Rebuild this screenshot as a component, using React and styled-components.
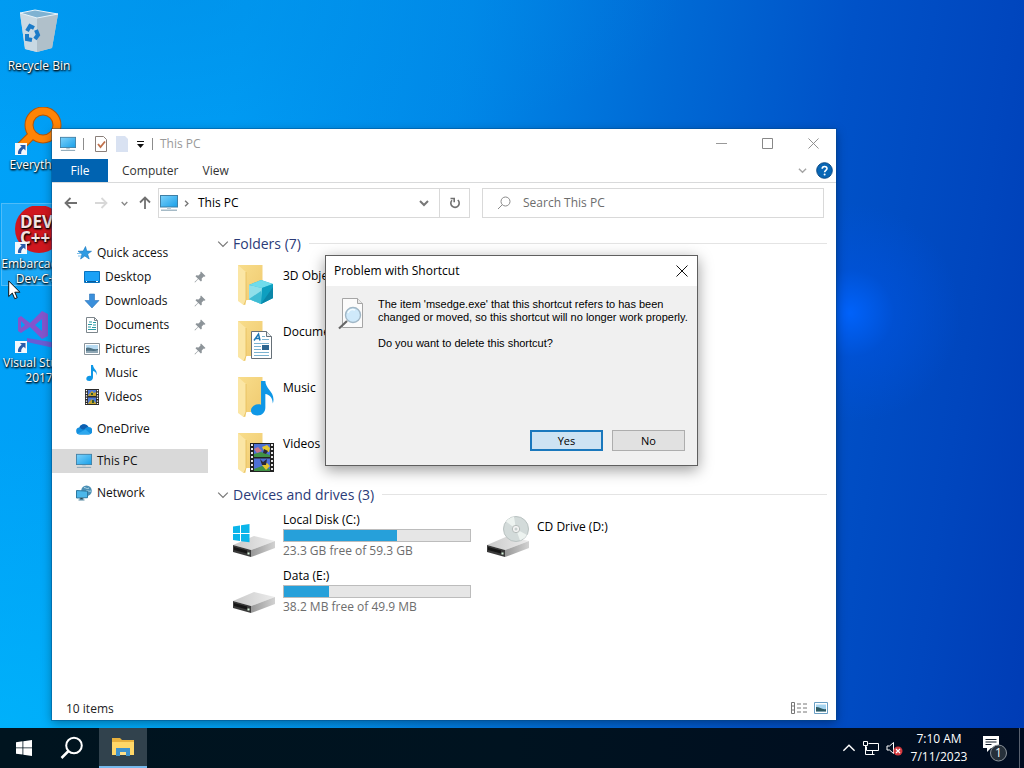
import React from 'react'
import styled, { createGlobalStyle, css } from 'styled-components'

const GlobalStyle = createGlobalStyle`
  * {
    box-sizing: border-box;
  }

  body {
    margin: 0;
    overflow: hidden;
    font-family: 'Open Sans', 'Noto Sans', sans-serif;
    font-size: 12px;
    line-height: 16px;
    color: #000;
  }

  button,
  input {
    font: inherit;
    color: inherit;
    margin: 0;
    padding: 0;
    border: 0;
    background: none;
  }

  svg {
    display: block;
    flex: none;
  }
`

const Screen = styled.div`
  display: flex;
  flex-direction: column;
  height: 100vh;
`

const Desktop = styled.main`
  position: relative;
  flex: 1;
  min-height: 0;
  overflow: hidden;
  background:
    radial-gradient(ellipse 110px 110px at 83% 43%, #0062fa 0%, rgba(0, 84, 225, 0.5) 40%, rgba(0, 76, 205, 0) 100%),
    radial-gradient(ellipse 420px 300px at 0% 100%, rgba(0, 184, 252, 0.7) 0%, rgba(0, 180, 250, 0) 100%),
    radial-gradient(ellipse 500px 160px at 18% 0%, rgba(0, 140, 228, 0.5) 0%, rgba(0, 140, 228, 0) 100%),
    linear-gradient(98deg, #00a2f8 0%, #009cf4 22%, #0088e8 42%, #006ad5 60%, #0052c8 76%, #0046be 90%, #003cb5 100%);
`

const ShortcutList = styled.div`
  display: flex;
  flex-direction: column;
  gap: 16px;
  width: 77px;
  padding: 5px 0 0 1px;
`

const Shortcut = styled.a`
  display: flex;
  flex-direction: column;
  align-items: center;
  gap: 2px;
  height: 83px;
  padding-top: 2px;
  border: 1px solid ${(props) => (props.$selected ? '#4fbcf8' : 'transparent')};
  background: ${(props) => (props.$selected ? 'rgba(110, 195, 250, 0.25)' : 'none')};
  color: #fff;
  line-height: 15px;
  text-align: center;
  text-decoration: none;
  text-shadow: 0 1px 2px #000, 1px 1px 2px #000;
`

const Cursor = styled.svg`
  position: absolute;
  left: 8px;
  top: 280px;
`

const Window = styled.section`
  position: absolute;
  left: 52px;
  top: 129px;
  width: 784px;
  height: 591px;
  display: flex;
  flex-direction: column;
  background: #fff;
  box-shadow: 0 0 0 1px rgba(0, 70, 130, 0.4), 0 3px 10px rgba(0, 0, 0, 0.35);
`

const TitleBar = styled.header`
  display: flex;
  height: 30px;
  padding-left: 8px;
  color: #999;
`

const QuickTools = styled.div`
  display: flex;
  align-items: center;
  flex: 1;
  gap: 7px;
`

const Divider = styled.span`
  width: 1px;
  height: 12px;
  margin-right: ${(props) => (props.$wide ? '3px' : '0')};
  background: #8c8c8c;
`

const CaptionButton = styled.button`
  display: flex;
  align-items: center;
  justify-content: center;
  width: 46px;
  height: 28px;
  color: #999;
`

const Ribbon = styled.div`
  display: flex;
  align-items: center;
  height: 24px;
  padding-right: 3px;
  border-bottom: 1px solid #d9dadb;
  color: #333;
`

const RibbonTab = styled.button`
  height: 23px;
  padding: 0 10px 0 14px;

  ${(props) =>
    props.$active &&
    css`
      width: 56px;
      padding: 0;
      background: #0063b1;
      color: #fff;
    `}
`

const RibbonEnd = styled.div`
  display: flex;
  align-items: center;
  gap: 9px;
  margin-left: auto;
`

const NavRow = styled.div`
  display: grid;
  grid-template-columns: 30px 30px 16px 26px minmax(0, 1fr) 342px;
  align-items: center;
  height: 40px;
  padding: 0 12px 0 4px;
`

const NavButton = styled.button`
  display: flex;
  align-items: center;
  justify-content: center;
  height: 30px;
`

const AddressBar = styled.div`
  display: flex;
  align-items: center;
  height: 30px;
  margin-right: 12px;
  border: 1px solid #d9d9d9;
`

const Crumbs = styled.div`
  display: flex;
  align-items: center;
  flex: 1;
  gap: 5px;
  padding-left: 1px;

  button {
    padding-left: 3px;
  }
`

const AddressButton = styled(NavButton)`
  width: 30px;
  height: 28px;
  border-left: ${(props) => (props.$divided ? '1px solid #d9d9d9' : '0')};
`

const SearchBox = styled.label`
  display: flex;
  align-items: center;
  gap: 12px;
  height: 30px;
  padding: 0 14px;
  border: 1px solid #d9d9d9;

  input {
    flex: 1;
    min-width: 0;
    outline: none;
  }

  input::placeholder {
    color: #6d6d6d;
    opacity: 1;
  }
`

const WindowBody = styled.div`
  display: flex;
  flex: 1;
  min-height: 0;
`

const Sidebar = styled.nav`
  width: 156px;
  padding-top: 18px;
`

const SideLink = styled.a`
  display: flex;
  align-items: center;
  gap: 5px;
  height: 24px;
  margin-top: ${(props) => (props.$spaced ? '8px' : '0')};
  padding: 0 2px 0 ${(props) => (props.$nested ? '32px' : '24px')};
  background: ${(props) => (props.$active ? '#d9d9d9' : 'none')};
  color: #111;
  text-decoration: none;

  svg:last-child:not(:first-child) {
    margin-left: auto;
  }
`

const Content = styled.div`
  flex: 1;
  padding: 8px 9px 0;
`

const GroupTitle = styled.h2`
  display: flex;
  align-items: center;
  gap: 4px;
  height: 25px;
  margin: 0;
  font-size: 14px;
  font-weight: 400;
  color: #2b3b78;

  &::after {
    content: '';
    flex: 1;
    height: 1px;
    margin-left: 4px;
    background: #e4e4e4;
  }
`

const TileGrid = styled.div`
  display: grid;
  grid-template-columns: repeat(auto-fill, 254px);
  grid-auto-rows: 56px;
  padding: 2px 0 0 12px;
`

const Tile = styled.div`
  display: flex;
  gap: 6px;
  padding-top: 3px;
`

const TileText = styled.div`
  width: 188px;
  padding-top: ${(props) => (props.$drive ? '0' : '7px')};
`

const Meter = styled.div`
  height: 13px;
  margin: 1px 0;
  border: 1px solid #bcbcbc;
  background: #e6e6e6;
`

const MeterFill = styled.div`
  height: 100%;
  background: #26a0da;
`

const FreeSpace = styled.div`
  color: #6d6d6d;
`

const StatusBar = styled.footer`
  display: flex;
  align-items: center;
  justify-content: space-between;
  height: 22px;
  padding: 0 8px 0 14px;
  color: #222;
`

const ViewButtons = styled.div`
  display: flex;
  gap: 7px;
  padding-bottom: 2px;
`

const Dialog = styled.section`
  position: absolute;
  left: 325px;
  top: 255px;
  width: 373px;
  height: 211px;
  display: flex;
  flex-direction: column;
  border: 1px solid #5f5f5f;
  background: #f0f0f0;
  box-shadow: 0 4px 14px rgba(0, 0, 0, 0.4);
`

const DialogTitle = styled.header`
  display: flex;
  align-items: center;
  justify-content: space-between;
  height: 30px;
  padding: 0 9px 0 8px;
  background: #fff;
`

const DialogBody = styled.div`
  display: flex;
  flex: 1;
  gap: 10px;
  padding: 12px 0 0 10px;
  font-family: 'Liberation Sans', Arial, sans-serif;
  font-size: 11px;
  line-height: 13px;

  p {
    margin: 0 0 13px;
    white-space: nowrap;
  }
`

const DialogActions = styled.div`
  display: flex;
  justify-content: flex-end;
  gap: 9px;
  padding: 0 12px 14px;
`

const DialogButton = styled.button`
  width: 73px;
  height: 21px;
  border: ${(props) => (props.$primary ? '2px solid #1a78bd' : '1px solid #adadad')};
  background: ${(props) => (props.$primary ? '#cde3f3' : '#e1e1e1')};
  font-size: 11px;
  line-height: 13px;
`

const Taskbar = styled.footer`
  display: flex;
  align-items: stretch;
  height: 40px;
  background: linear-gradient(90deg, #00141f 0%, #001320 50%, #000c20 100%);
  color: #fff;
`

const TaskButton = styled.button`
  display: flex;
  align-items: center;
  justify-content: center;
  width: 48px;
  margin-left: ${(props) => (props.$open ? '3px' : '0')};
  background: ${(props) => (props.$open ? '#31424d' : 'none')};
  border-bottom: ${(props) => (props.$open ? '2px solid #76b9ed' : '0')};
`

const Tray = styled.div`
  display: flex;
  align-items: center;
  gap: 7px;
  margin-left: auto;
`

const Clock = styled.button`
  width: 58px;
  margin-right: 7px;
  line-height: 18px;
  text-align: center;
`

const NoticeButton = styled.button`
  width: 38px;
  height: 40px;
  margin-right: 4px;
  border-right: 1px solid #59616f;
`

function MonitorIcon({ size = 18 }) {
  return (
    <svg width={size} height={size} viewBox="0 0 18 18">
      <defs>
        <linearGradient id="screen" x1="0" y1="0" x2="1" y2="1">
          <stop offset="0" stopColor="#7ed2fb" />
          <stop offset="1" stopColor="#189fe8" />
        </linearGradient>
      </defs>
      <rect x=".5" y="1.500" width="17" height="11.500" fill="url(#screen)" stroke="#3f7fa5" />
      <path d="M7 13.500h4v1.500H7z" fill="#b9cad5" />
      <path d="M1 16.200h16" stroke="#8fa9b8" strokeWidth="1.200" />
    </svg>
  )
}

function Chevron({ size = 9, color = '#777', width = 1.5, direction = 'down' }) {
  const paths = {
    down: 'M1 3l4 4 4-4',
    right: 'M3 1l4 4-4 4',
    up: 'M1 7l4-4 4 4',
  }
  return (
    <svg width={size} height={size} viewBox="0 0 10 10" fill="none" stroke={color} strokeWidth={width}>
      <path d={paths[direction]} />
    </svg>
  )
}

function CrossIcon({ size = 12, color = '#888' }) {
  return (
    <svg width={size} height={size} viewBox="0 0 12 12" stroke={color}>
      <path d="M.5.5l11 11M11.500.5l-11 11" />
    </svg>
  )
}

function ArrowIcon({ rotate = 0, color = '#707070' }) {
  return (
    <svg width="14" height="14" viewBox="0 0 14 14" fill="none" stroke={color} strokeWidth="1.800">
      <path d="M13 7H2M6.500 2L1.500 7l5 5" transform={`rotate(${rotate} 7 7)`} />
    </svg>
  )
}

function PinIcon() {
  return (
    <svg width="12" height="12" viewBox="0 0 12 12" fill="#8d9499">
      <path d="M7 .5L11.500 5l-1 .7-.8-.2-2 2 .1 2.200-.9.8L4.300 8 1 11.500.5 11 4 7.700 1.500 5.200l.8-.9 2.200.1 2-2-.2-.9z" />
    </svg>
  )
}

function PictureIcon() {
  return (
    <svg width="16" height="16" viewBox="0 0 16 16">
      <path d="M.5 2.500h15v11H.5z" fill="#fff" stroke="#8b959c" />
      <path d="M2 4h12v8H2z" fill="#b8dbf2" />
      <path d="M2 7c3-2 6 2 12 1v4H2z" fill="#4e7183" />
      <path d="M2 10c4-1 8 1 12-1v3H2z" fill="#8fa7b5" />
    </svg>
  )
}

function FilmIcon() {
  return (
    <svg width="16" height="16" viewBox="0 0 16 16">
      <path d="M1 0h14v16H1z" fill="#2b2b2b" />
      <path d="M4 1h8v6H4zM4 8.500h8v6.500H4z" fill="#4c78d8" />
      <path d="M5 5l3-3 2 2 2-1v4H4zM5 13l3-3 4 4v1H4z" fill="#c4a42d" />
      <path d="M7 4h2v2H7zM8 11h2v3H8z" fill="#31572f" />
      <path d="M2.500 1v14M13.500 1v14" stroke="#fff" strokeWidth="1.300" strokeDasharray="1.300 1.300" />
    </svg>
  )
}

function NoteShape() {
  return <path d="M7 0h2c0 4 5 5 3.500 10.500C12.300 7.500 11 6.300 9 6v6.300C9 14.500 7.500 16 5.300 16 3.300 16 2.300 15 2.300 13.700c0-2 2.200-3.300 4.700-2.700z" fill="#0f97e6" />
}

const sideIcons = {
  star: (
    <svg width="16" height="16" viewBox="0 0 16 16">
      <path d="M9.500 1.500l1.300 4.600 4.700.2-3.900 2.700 1.600 5-4.400-3-4.200 3 1.400-4.900L2 6.200l5.200-.1z" fill="#2f9be3" stroke="#1877bd" strokeWidth=".6" />
      <path d="M1 8.500h4M2 11h3" stroke="#7dc0ec" />
    </svg>
  ),
  desktop: (
    <svg width="16" height="16" viewBox="0 0 16 16">
      <path d="M.5 2.500h15v11H.5z" fill="#1ba1f6" stroke="#0873c0" />
      <path d="M1 12.500h14" stroke="#0a5b9b" />
      <path d="M2 12.500h1M12 12.500h2" stroke="#fff" />
    </svg>
  ),
  download: (
    <svg width="16" height="16" viewBox="0 0 16 16">
      <path d="M5.500 1h5v6.500H15L8 15 1 7.500h4.500z" fill="#3a8fdb" stroke="#2b74b8" strokeWidth=".6" />
    </svg>
  ),
  document: (
    <svg width="16" height="16" viewBox="0 0 16 16">
      <path d="M2.500.5h8l3 3v12h-11z" fill="#fff" stroke="#7d868c" />
      <path d="M10.500.5v3h3" fill="none" stroke="#7d868c" />
      <path d="M5 5h3M9 5.500h3M4 7.500h4M9 8h3M4 10h3M8 10.500h4M4 12.500h8" stroke="#2a9aa4" />
    </svg>
  ),
  picture: <PictureIcon />,
  music: (
    <svg width="16" height="16" viewBox="0 0 16 16">
      <NoteShape />
    </svg>
  ),
  video: <FilmIcon />,
  cloud: (
    <svg width="16" height="16" viewBox="0 0 16 16">
      <path d="M4 13.500a3.500 3.500 0 0 1-.6-7A5 5 0 0 1 12.500 6a3.600 3.600 0 0 1 .3 7.500z" fill="#1490df" />
      <path d="M3.400 6.500A5 5 0 0 1 12.500 6C9 6 9.500 9 6.500 8.500 5 8.200 4.500 6.500 3.400 6.500z" fill="#0f5fb0" />
      <path d="M2 12.500L9.500 8.500l5 4.300c-.5.500-1 .7-1.700.7H4c-.8 0-1.500-.4-2-1z" fill="#2ea8ee" />
    </svg>
  ),
  monitor: <MonitorIcon size={16} />,
  network: (
    <svg width="16" height="16" viewBox="0 0 16 16">
      <circle cx="10.500" cy="5.800" r="5.300" fill="#4b8fb5" />
      <path d="M8 2.500c2 0 3 2 5 .5M10 6c2-1 3 1 5 0" stroke="#b5dcea" fill="none" />
      <path d="M.5 5.500l11 .7v6.500l-11 .3z" fill="#4cb7ea" stroke="#2d789f" />
      <path d="M4 13h3v1.500H4zM2.500 15h6" stroke="#55879f" />
    </svg>
  ),
}

const sideItems = [
  { label: 'Quick access', icon: 'star' },
  { label: 'Desktop', icon: 'desktop', nested: true, pinned: true },
  { label: 'Downloads', icon: 'download', nested: true, pinned: true },
  { label: 'Documents', icon: 'document', nested: true, pinned: true },
  { label: 'Pictures', icon: 'picture', nested: true, pinned: true },
  { label: 'Music', icon: 'music', nested: true },
  { label: 'Videos', icon: 'video', nested: true },
  { label: 'OneDrive', icon: 'cloud', spaced: true },
  { label: 'This PC', icon: 'monitor', spaced: true, active: true },
  { label: 'Network', icon: 'network', spaced: true },
]

const folderOverlays = {
  cube: (
    <>
      <path d="M20 24l12-5 12 4v14l-12 6-12-5z" fill="#27b5d3" />
      <path d="M20 24l12-5 12 4-11 4z" fill="#6fdcec" />
      <path d="M20 24l13 3-1 16-12-5z" fill="#8fdfea" />
      <path d="M20 38l12-8v13z" fill="#3fbcd4" />
      <path d="M33 27l11-4v14l-12 6z" fill="#0e9fc0" />
      <path d="M32 43l12-17v11z" fill="#0b86a8" />
    </>
  ),
  document: (
    <>
      <path d="M22.500 14.500h15l5 5v22h-20z" fill="#fff" stroke="#667078" />
      <path d="M37.500 14.500v5h5" fill="#e9edf0" stroke="#667078" />
      <path d="M25 23.500l4.500-6.500 1.500 6.500M27 21.500h4" fill="none" stroke="#1c78b4" strokeWidth="1.500" />
      <path d="M33 19.500h3M33 22.500h7M25 26.500h15M25 29.500h7M25 32.500h7M25 35.500h15M25 38.500h15" stroke="#7bb3d0" />
      <path d="M33 28h7v5h-7z" fill="#2e6690" />
    </>
  ),
  music: (
    <g transform="translate(17 8) scale(2.150)">
      <NoteShape />
    </g>
  ),
  video: (
    <>
      <path d="M21 14h24v29H21z" fill="#222" />
      <path d="M25 15h16v13H25zM25 29.500h16V42H25z" fill="#4c70d5" />
      <path d="M25 25l7-2 9 3v2H25zM25 40l8-3 8 3v2H25z" fill="#409147" />
      <path d="M25 20l4-2 4 4-5 2z" fill="#c87588" />
      <path d="M33 18l5-2 3 3-1 4-5-1zM33 36l5-2 3 3-4 4z" fill="#e6c62d" />
      <path d="M35 20l4 2-2 3-3-1zM31 30l3 3 4-3-1 6h-4z" fill="#2c2735" />
      <path d="M23 15v27M43 15v27" stroke="#fff" strokeWidth="1.800" strokeDasharray="2 2" />
    </>
  ),
  download: <path d="M27 20h10v10h6L32 42 21 30h6z" fill="#3a8fdb" />,
  picture: <path d="M21 22h24v18H21z" fill="#a9d3ee" stroke="#888" />,
  desktop: <path d="M21 22h24v18H21z" fill="#1ba1f6" stroke="#0873c0" />,
}

function FolderIcon({ kind }) {
  return (
    <svg width="48" height="48" viewBox="0 0 48 48">
      <defs>
        <linearGradient id="folderBack" x1="0" y1="0" x2="1" y2="1">
          <stop offset="0" stopColor="#f8dd8b" />
          <stop offset="1" stopColor="#f0ca70" />
        </linearGradient>
      </defs>
      <path d="M9 4h24.500v35H9z" fill="url(#folderBack)" />
      <path d="M9 4l8 7v32.500l-2.500.5L9 40z" fill="#fbe6a5" />
      <path d="M17 11v28l-2 5" fill="none" stroke="#e6bd5a" strokeWidth=".8" />
      {folderOverlays[kind]}
    </svg>
  )
}

function DriveIcon({ kind }) {
  return (
    <svg width="48" height="48" viewBox="0 0 48 48">
      <defs>
        <linearGradient id="driveTop" x1="0" y1="0" x2="1" y2="0">
          <stop offset="0" stopColor="#c9c9c9" />
          <stop offset="1" stopColor="#ececec" />
        </linearGradient>
        <linearGradient id="driveSide" x1="0" y1="0" x2="1" y2="0">
          <stop offset="0" stopColor="#979797" />
          <stop offset="1" stopColor="#d2d2d2" />
        </linearGradient>
      </defs>
      <path d="M4 33l21-9 21 5-24 9z" fill="url(#driveTop)" />
      <path d="M22 38l24-9v7l-24 9z" fill="url(#driveSide)" />
      <path d="M4 33l18 5v7L4 40z" fill="#3a3a3a" />
      <path d="M5 35l13 3.500v3L5 38z" fill="#161616" />
      <path d="M18.500 40.500h2v2h-2z" fill="#d9f5dc" />
      {kind === 'windows' && (
        <path d="M4 14.500l7-1V21H4zM12 13.300l8.500-1.300v9H12zM4 22h7v7l-7-1zM12 22h8.500v8.300L12 29.200z" fill="#0bb5ea" />
      )}
      {kind === 'disc' && (
        <>
          <circle cx="33" cy="17" r="12.500" fill="#d3dbda" stroke="#b9c2c1" />
          <path d="M33 17L23 9.500A12.500 12.500 0 0 1 31 4.700zM33 17l11 6a12.500 12.500 0 0 1-7 5.500z" fill="#edf3f0" />
          <circle cx="33" cy="17" r="3.700" fill="#f3f3f3" stroke="#b6bdbb" />
          <circle cx="33" cy="17" r="1.500" fill="#c6cfcd" />
        </>
      )}
    </svg>
  )
}

const folders = [
  { name: '3D Objects', kind: 'cube' },
  { name: 'Desktop', kind: 'desktop' },
  { name: 'Documents', kind: 'document' },
  { name: 'Downloads', kind: 'download' },
  { name: 'Music', kind: 'music' },
  { name: 'Pictures', kind: 'picture' },
  { name: 'Videos', kind: 'video' },
]

const drives = [
  { name: 'Local Disk (C:)', kind: 'windows', used: 61, free: '23.3 GB free of 59.3 GB' },
  { name: 'CD Drive (D:)', kind: 'disc' },
  { name: 'Data (E:)', kind: 'plain', used: 24, free: '38.2 MB free of 49.9 MB' },
]

function LinkBadge() {
  return (
    <>
      <path d="M0 36h12v12H0z" fill="#f4f8fc" />
      <path d="M5 38h5.500v5.500L8.700 41.700C6.700 43 6 44.500 6.200 47H3c-.5-3 1-5.500 3.700-7.300z" fill="#2a5caa" />
    </>
  )
}

const shortcuts = [
  {
    label: 'Recycle Bin',
    art: (
      <>
        <path d="M5 5l38 1-6 34-15 4-12-3z" fill="#c5d5de" />
        <path d="M5 5l17 4v35l-12-3z" fill="#c9d9e3" />
        <path d="M22 9l21-3-6 34-15 4z" fill="#b0c0ca" />
        <path d="M5 5l15-3 23 4-21 4z" fill="#7fb2d2" stroke="#e8f3fa" />
        <g fill="none" stroke="#1b7bc8" strokeWidth="4">
          <path d="M12 23l3-5 4 2" />
          <path d="M21 22l2 5-3 4" />
          <path d="M17 32l-5-1v-5" />
        </g>
      </>
    ),
  },
  {
    label: 'Everything',
    art: (
      <>
        <path d="M18 27L4 41" stroke="#b45505" strokeWidth="9" />
        <circle cx="28" cy="18" r="14" fill="none" stroke="#b45505" strokeWidth="9" />
        <path d="M18 27L4 41" stroke="#ff8405" strokeWidth="7" />
        <circle cx="28" cy="18" r="14" fill="none" stroke="#ff8405" strokeWidth="7" />
        <LinkBadge />
      </>
    ),
  },
  {
    label: 'Embarcadero Dev-C++',
    selected: true,
    art: (
      <>
        <circle cx="24" cy="23" r="24" fill="#d0171f" />
        <g fill="#f6e4e4" fontFamily="Open Sans" fontWeight="700" fontSize="17">
          <text x="5" y="22">DEV</text>
          <text x="5" y="38">C++</text>
        </g>
        <LinkBadge />
      </>
    ),
  },
  {
    label: 'Visual Studio 2017',
    art: (
      <>
        <path d="M3 13l3-2 9 7 12-12 6 3v22l-6 3-12-12-9 6-3-2zM6 16v7l4-3zM27 14l-7 6 7 6z" fill="#8355cc" fillRule="evenodd" />
        <path d="M12 33l36 6v6l-36-8z" fill="#6b5cd4" />
        <LinkBadge />
      </>
    ),
  },
]

export default function App() {
  return (
    <Screen>
      <GlobalStyle />
      <Desktop>
        <ShortcutList>
          {shortcuts.map((item) => (
            <Shortcut key={item.label} href="#" $selected={item.selected}>
              <svg width="48" height="48" viewBox="0 0 48 48">
                {item.art}
              </svg>
              {item.label}
            </Shortcut>
          ))}
        </ShortcutList>

        <Window>
          <TitleBar>
            <QuickTools>
              <MonitorIcon size={16} />
              <Divider $wide />
              <svg width="14" height="16" viewBox="0 0 14 16" fill="none">
                <path d="M1.500.5h8l3 3v12h-11z" fill="#fff" stroke="#8a7f7a" />
                <path d="M4 8l2.500 3L11 5.500" stroke="#c0704a" strokeWidth="1.800" />
              </svg>
              <svg width="14" height="16" viewBox="0 0 14 16">
                <path d="M1 0h9l3 3v13H1z" fill="#d9e2f2" />
              </svg>
              <svg width="9" height="9" viewBox="0 0 9 9">
                <path d="M1 1.500h7" stroke="#111" />
                <path d="M1 4h7L4.500 8z" fill="#111" />
              </svg>
              <Divider />
              This PC
            </QuickTools>
            <CaptionButton aria-label="Minimize">
              <svg width="11" height="11" viewBox="0 0 11 11" stroke="#999">
                <path d="M0 5.500h11" />
              </svg>
            </CaptionButton>
            <CaptionButton aria-label="Maximize">
              <svg width="11" height="11" viewBox="0 0 11 11" fill="none" stroke="#888">
                <path d="M.5.5h10v10H.5z" />
              </svg>
            </CaptionButton>
            <CaptionButton aria-label="Close">
              <CrossIcon size={11} />
            </CaptionButton>
          </TitleBar>

          <Ribbon>
            <RibbonTab $active>File</RibbonTab>
            <RibbonTab>Computer</RibbonTab>
            <RibbonTab>View</RibbonTab>
            <RibbonEnd>
              <Chevron color="#a5a5a5" />
              <svg width="17" height="17" viewBox="0 0 17 17">
                <circle cx="8.500" cy="8.500" r="7.800" fill="#0866b5" stroke="#0a4a86" />
                <path d="M6.200 6.800C6.200 3.800 11 3.800 11 6.500c0 1.800-2.400 1.800-2.400 3.700" fill="none" stroke="#fff" strokeWidth="1.600" />
                <circle cx="8.600" cy="12.500" r="1" fill="#fff" />
              </svg>
            </RibbonEnd>
          </Ribbon>

          <NavRow>
            <NavButton aria-label="Back">
              <ArrowIcon />
            </NavButton>
            <NavButton aria-label="Forward">
              <ArrowIcon rotate={180} color="#d8d8d8" />
            </NavButton>
            <NavButton aria-label="Recent locations">
              <Chevron size={7} color="#888" width={2} />
            </NavButton>
            <NavButton aria-label="Up">
              <ArrowIcon rotate={90} />
            </NavButton>
            <AddressBar>
              <Crumbs>
                <MonitorIcon size={18} />
                <Chevron size={7} direction="right" width={2} />
                <button>This PC</button>
              </Crumbs>
              <AddressButton aria-label="Previous locations">
                <Chevron size={10} width={2} />
              </AddressButton>
              <AddressButton $divided aria-label="Refresh">
                <svg width="12" height="12" viewBox="0 0 12 12" fill="none" stroke="#707070" strokeWidth="1.600">
                  <path d="M3 3.200A4.200 4.200 0 1 0 8.800 3M1.500 1.500h3.700v3.700" />
                </svg>
              </AddressButton>
            </AddressBar>
            <SearchBox>
              <svg width="14" height="14" viewBox="0 0 14 14" fill="none" stroke="#8a8a8a">
                <circle cx="8.500" cy="5.500" r="4.500" />
                <path d="M5.300 8.700L1 13" />
              </svg>
              <input placeholder="Search This PC" aria-label="Search This PC" />
            </SearchBox>
          </NavRow>

          <WindowBody>
            <Sidebar>
              {sideItems.map((item) => (
                <SideLink
                  key={item.label}
                  href="#"
                  $nested={item.nested}
                  $spaced={item.spaced}
                  $active={item.active}
                >
                  {sideIcons[item.icon]}
                  {item.label}
                  {item.pinned && <PinIcon />}
                </SideLink>
              ))}
            </Sidebar>
            <Content>
              <GroupTitle>
                <Chevron size={12} width={1} />
                Folders (7)
              </GroupTitle>
              <TileGrid>
                {folders.map((folder) => (
                  <Tile key={folder.name}>
                    <FolderIcon kind={folder.kind} />
                    <TileText>{folder.name}</TileText>
                  </Tile>
                ))}
              </TileGrid>
              <GroupTitle>
                <Chevron size={12} width={1} />
                Devices and drives (3)
              </GroupTitle>
              <TileGrid>
                {drives.map((drive) => (
                  <Tile key={drive.name}>
                    <DriveIcon kind={drive.kind} />
                    <TileText $drive={drive.free}>
                      {drive.name}
                      {drive.free && (
                        <>
                          <Meter>
                            <MeterFill style={{ width: `${drive.used}%` }} />
                          </Meter>
                          <FreeSpace>{drive.free}</FreeSpace>
                        </>
                      )}
                    </TileText>
                  </Tile>
                ))}
              </TileGrid>
            </Content>
          </WindowBody>

          <StatusBar>
            10 items
            <ViewButtons>
              <button aria-label="Details view">
                <svg width="16" height="12" viewBox="0 0 16 12" fill="none" stroke="#777">
                  <path d="M.5.5h3v11h-3zM.5 4h3M.5 8h3" />
                  <path d="M6 2h4M12 2h4M6 6h4M12 6h4M6 10h4M12 10h4" />
                </svg>
              </button>
              <button aria-label="Large icons view">
                <svg width="14" height="12" viewBox="0 0 14 12">
                  <path d="M.5.5h13v11H.5z" fill="#fff" stroke="#6a9fc4" />
                  <path d="M2 2.500h10v7H2z" fill="#a5d4f0" />
                  <path d="M2 5c4 0 6 3 10 2v2.500H2z" fill="#2d5a62" />
                </svg>
              </button>
            </ViewButtons>
          </StatusBar>
        </Window>

        <Dialog role="dialog" aria-label="Problem with Shortcut">
          <DialogTitle>
            Problem with Shortcut
            <button aria-label="Close dialog">
              <CrossIcon color="#111" />
            </button>
          </DialogTitle>
          <DialogBody>
            <svg width="32" height="32" viewBox="0 0 32 32">
              <path d="M6.500.5h15l5 5v24h-20z" fill="#fbfbfb" stroke="#a5a5a5" />
              <path d="M21.500.5v5h5" fill="#e8e8e8" stroke="#a5a5a5" />
              <path d="M11 23l-8 7.500" stroke="#666" strokeWidth="2.200" />
              <circle cx="17" cy="17" r="7.500" fill="#cfe9fa" stroke="#a1b7c6" strokeWidth="1.400" />
              <path d="M12 15c1-3 4-4 7-3" fill="none" stroke="#f2fbff" strokeWidth="1.500" />
            </svg>
            <div>
              <p>
                The item 'msedge.exe' that this shortcut refers to has been
                <br />
                changed or moved, so this shortcut will no longer work properly.
              </p>
              <p>Do you want to delete this shortcut?</p>
            </div>
          </DialogBody>
          <DialogActions>
            <DialogButton $primary>Yes</DialogButton>
            <DialogButton>No</DialogButton>
          </DialogActions>
        </Dialog>

        <Cursor width="13" height="20" viewBox="0 0 13 20">
          <path d="M.7.900v15.600l3.600-3.400 2.400 5.600 2.500-1-2.400-5.500h5.100z" fill="#fff" stroke="#111" />
        </Cursor>
      </Desktop>

      <Taskbar>
        <TaskButton aria-label="Start">
          <svg width="16" height="16" viewBox="0 0 16 16" fill="#fff">
            <path d="M0 2.200l6.500-.9v6.200H0zM7.300 1.200L16 0v7.500H7.300zM0 8.300h6.500v6.300L0 13.700zM7.300 8.300H16V16l-8.700-1.200z" />
          </svg>
        </TaskButton>
        <TaskButton aria-label="Search">
          <svg width="24" height="24" viewBox="0 0 24 24" fill="none" stroke="#fff" strokeWidth="2">
            <circle cx="14" cy="9.500" r="7.800" />
            <path d="M8.500 15L1.500 22" strokeWidth="2.500" />
          </svg>
        </TaskButton>
        <TaskButton $open aria-label="File Explorer">
          <svg width="22" height="20" viewBox="0 0 22 20">
            <path d="M0 1h8l2 2h12v15H0z" fill="#e8b13e" />
            <path d="M0 5h22v13H0z" fill="#ffd768" />
            <path d="M4 11h14v8h-4v-4H8v4H4z" fill="#3f92cc" />
            <path d="M8 15h6v3H8z" fill="#ffe08a" />
          </svg>
        </TaskButton>
        <Tray>
          <Chevron size={14} color="#fff" width={1} direction="up" />
          <svg width="16" height="14" viewBox="0 0 16 14" fill="none" stroke="#fff">
            <path d="M5.500 2.500h10v7H3.500v-4M.5.500h4v4h-4zM2.500 4.500v9M2.500 13.500h9M9.500 9.500v4" />
          </svg>
          <svg width="17" height="15" viewBox="0 0 17 15">
            <path d="M1 5h2.500L7.500 1.500v11L3.500 9H1z" fill="none" stroke="#fff" />
            <circle cx="12" cy="10" r="4.500" fill="#d43a3f" />
            <path d="M10 8l4 4M14 8l-4 4" stroke="#fff" strokeWidth="1.200" />
          </svg>
          <Clock>
            7:10 AM
            <br />
            7/11/2023
          </Clock>
          <NoticeButton aria-label="1 notification">
            <svg width="26" height="28" viewBox="0 0 26 28">
              <path d="M1 2h16v12H9l-4 4v-4H1z" fill="#fff" />
              <path d="M3.500 5.500h11M3.500 8h11M3.500 10.500h6" stroke="#101c2a" />
              <circle cx="16.500" cy="19" r="8" fill="#26303a" stroke="#8b939a" />
              <text x="16.500" y="23" fill="#fff" fontSize="12" textAnchor="middle">
                1
              </text>
            </svg>
          </NoticeButton>
        </Tray>
      </Taskbar>
    </Screen>
  )
}
